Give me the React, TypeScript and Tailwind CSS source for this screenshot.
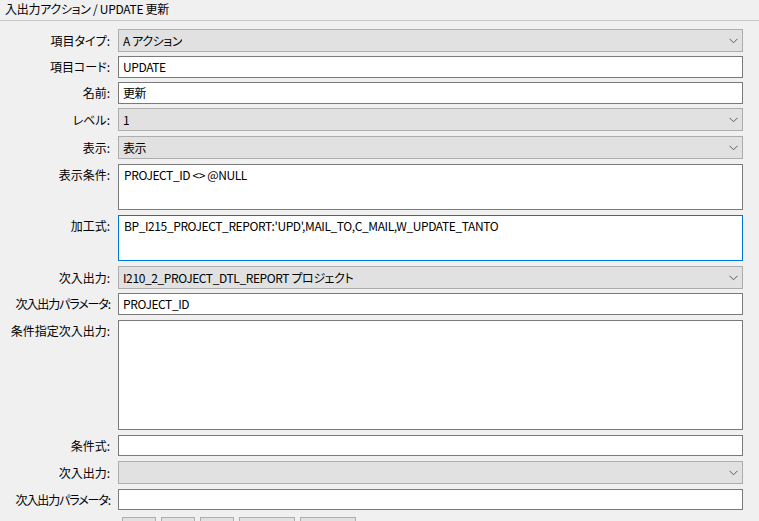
import { ReactNode } from "react";

type Row = {
  label: string;
  kind: "select" | "input" | "area";
  value?: string;
  mt: string;
  h: string;
  focus?: boolean;
  tight?: boolean;
};

const rows: Row[] = [
  { label: "項目タイプ:", kind: "select", value: "A アクション", mt: "mt-[8px]", h: "h-[23px]" },
  { label: "項目コード:", kind: "input", value: "UPDATE", mt: "mt-[4px]", h: "h-[22px]" },
  { label: "名前:", kind: "input", value: "更新", mt: "mt-[4px]", h: "h-[22px]" },
  { label: "レベル:", kind: "select", value: "1", mt: "mt-[4px]", h: "h-[23px]" },
  { label: "表示:", kind: "select", value: "表示", mt: "mt-[5px]", h: "h-[23px]" },
  { label: "表示条件:", kind: "area", value: "PROJECT_ID <> @NULL", mt: "mt-[5px]", h: "h-[46px]" },
  {
    label: "加工式:",
    kind: "area",
    value: "BP_I215_PROJECT_REPORT:'UPD',MAIL_TO,C_MAIL,W_UPDATE_TANTO",
    mt: "mt-[5px]",
    h: "h-[46px]",
    focus: true,
  },
  { label: "次入出力:", kind: "select", value: "I210_2_PROJECT_DTL_REPORT プロジェクト", mt: "mt-[5px]", h: "h-[23px]" },
  { label: "次入出力パラメータ:", kind: "input", value: "PROJECT_ID", mt: "mt-[4px]", h: "h-[22px]", tight: true },
  { label: "条件指定次入出力:", kind: "area", mt: "mt-[5px]", h: "h-[110px]" },
  { label: "条件式:", kind: "input", mt: "mt-[5px]", h: "h-[21px]" },
  { label: "次入出力:", kind: "select", mt: "mt-[5px]", h: "h-[23px]" },
  { label: "次入出力パラメータ:", kind: "input", mt: "mt-[5px]", h: "h-[21px]", tight: true },
];

const Chevron = () => (
  <svg width="9" height="6" viewBox="0 0 9 6" className="shrink-0">
    <polyline points="0.5,0.8 4.5,4.8 8.5,0.8" fill="none" stroke="#5a5a5a" strokeWidth="1" />
  </svg>
);

const Field = ({ row }: { row: Row }): ReactNode => {
  if (row.kind === "select") {
    return (
      <div className={`${row.h} flex items-center justify-between bg-[#e1e1e1] border border-[#adadad] pl-[4px] pr-[4px]`}>
        <span className="truncate tracking-[-0.4px]">{row.value}</span>
        <Chevron />
      </div>
    );
  }
  if (row.kind === "input") {
    return (
      <div className={`${row.h} flex items-center bg-white border border-[#7a7a7a] pl-[4px]`}>
        <span className="truncate tracking-[-0.4px]">{row.value}</span>
      </div>
    );
  }
  return (
    <div
      className={`${row.h} bg-white border ${
        row.focus ? "border-[#0078d7]" : "border-[#7a7a7a]"
      } pl-[5px] pt-[2px] tracking-[-0.4px]`}
    >
      {row.value}
    </div>
  );
};

export default function App() {
  return (
    <div
      className="w-[759px] h-[521px] overflow-hidden bg-[#f0f0f0] text-[12px] text-[#000] leading-[16px] [font-feature-settings:'palt']"
      style={{ fontFamily: '"Noto Sans CJK JP", "Noto Sans", sans-serif' }}
    >
      <div className="h-[21px] pl-[5px] pt-[1px] border-b border-[#c8c8c8] tracking-[-0.3px]">
        入出力アクション / UPDATE 更新
      </div>

      <div className="flex flex-col pr-[16px]">
        {rows.map((row, i) => (
          <div key={i} className={`flex ${row.mt}`}>
            <div
              className={`w-[113px] shrink-0 pr-[3px] flex justify-end whitespace-nowrap ${
                row.kind === "area" ? "items-start pt-[3px]" : "items-center"
              }`}
            >
              <span className={row.tight ? "tracking-[-1.1px]" : ""}>{row.label}</span>
            </div>
            <div className="flex-1 ml-[5px]">
              <Field row={row} />
            </div>
          </div>
        ))}

        <div className="flex gap-[5px] pl-[122px] mt-[7px]">
          <div className="w-[34px] h-[24px] bg-[#e1e1e1] border border-[#adadad]" />
          <div className="w-[34px] h-[24px] bg-[#e1e1e1] border border-[#adadad]" />
          <div className="w-[34px] h-[24px] bg-[#e1e1e1] border border-[#adadad]" />
          <div className="w-[56px] h-[24px] bg-[#e1e1e1] border border-[#adadad]" />
          <div className="w-[56px] h-[24px] bg-[#e1e1e1] border border-[#adadad]" />
        </div>
      </div>
    </div>
  );
}
